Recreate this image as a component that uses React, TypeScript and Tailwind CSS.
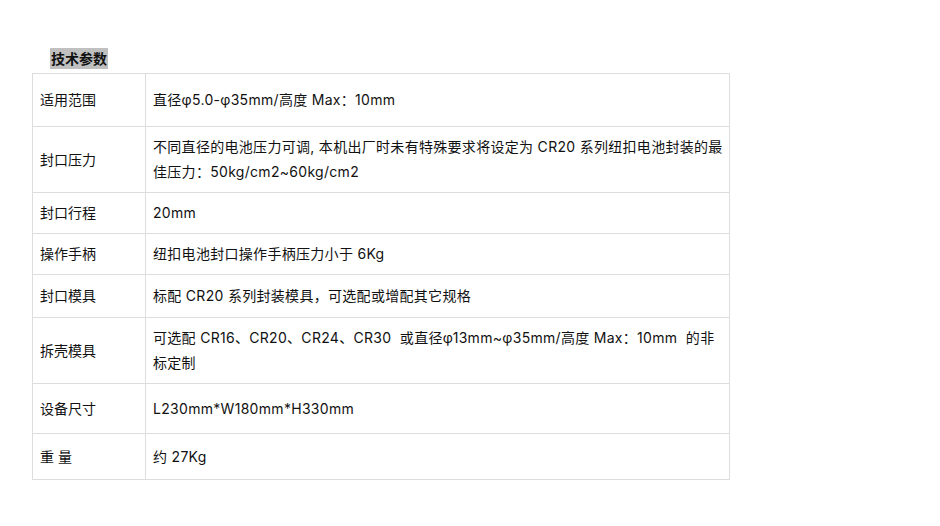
const rows: { label: string; value: string[]; h: string }[] = [
  { label: "适用范围", value: ["直径φ5.0-φ35mm/高度 Max：10mm"], h: "h-[53px]" },
  {
    label: "封口压力",
    value: ["不同直径的电池压力可调, 本机出厂时未有特殊要求将设定为 CR20 系列纽扣电池封装的最", "佳压力：50kg/cm2~60kg/cm2"],
    h: "h-[66px]",
  },
  { label: "封口行程", value: ["20mm"], h: "h-[41px]" },
  { label: "操作手柄", value: ["纽扣电池封口操作手柄压力小于 6Kg"], h: "h-[41px]" },
  { label: "封口模具", value: ["标配 CR20 系列封装模具，可选配或增配其它规格"], h: "h-[43px]" },
  {
    label: "拆壳模具",
    value: ["可选配 CR16、CR20、CR24、CR30  或直径φ13mm~φ35mm/高度 Max：10mm  的非", "标定制"],
    h: "h-[66px]",
  },
  { label: "设备尺寸", value: ["L230mm*W180mm*H330mm"], h: "h-[50px]" },
  { label: "重 量", value: ["约 27Kg"], h: "h-[46px]" },
];

export default function App() {
  return (
    <div className="min-h-[526px] bg-white pt-12 pl-8 font-['Inter','Noto_Sans_CJK_SC',sans-serif] text-[14px] text-[#111]">
      <div className="pl-[18px]">
        <span className="inline-block h-[21px] bg-[#c0c0c0] px-[1px] text-[14px] font-bold leading-[21px]">技术参数</span>
      </div>
      <table className="mt-1 w-[698px] table-fixed border-collapse">
        <tbody>
          {rows.map((r) => (
            <tr key={r.label} className={r.h}>
              <td className="w-[113px] border border-[#dddddd] pr-2 pl-[7px] pb-px align-middle leading-[25px] whitespace-pre">
                {r.label}
              </td>
              <td className="border border-[#dddddd] pr-1 pl-[7px] pb-px align-middle leading-[25px] tracking-[0.3px] whitespace-pre">
                {r.value.map((line, i) => (
                  <div key={i}>{line}</div>
                ))}
              </td>
            </tr>
          ))}
        </tbody>
      </table>
    </div>
  );
}
